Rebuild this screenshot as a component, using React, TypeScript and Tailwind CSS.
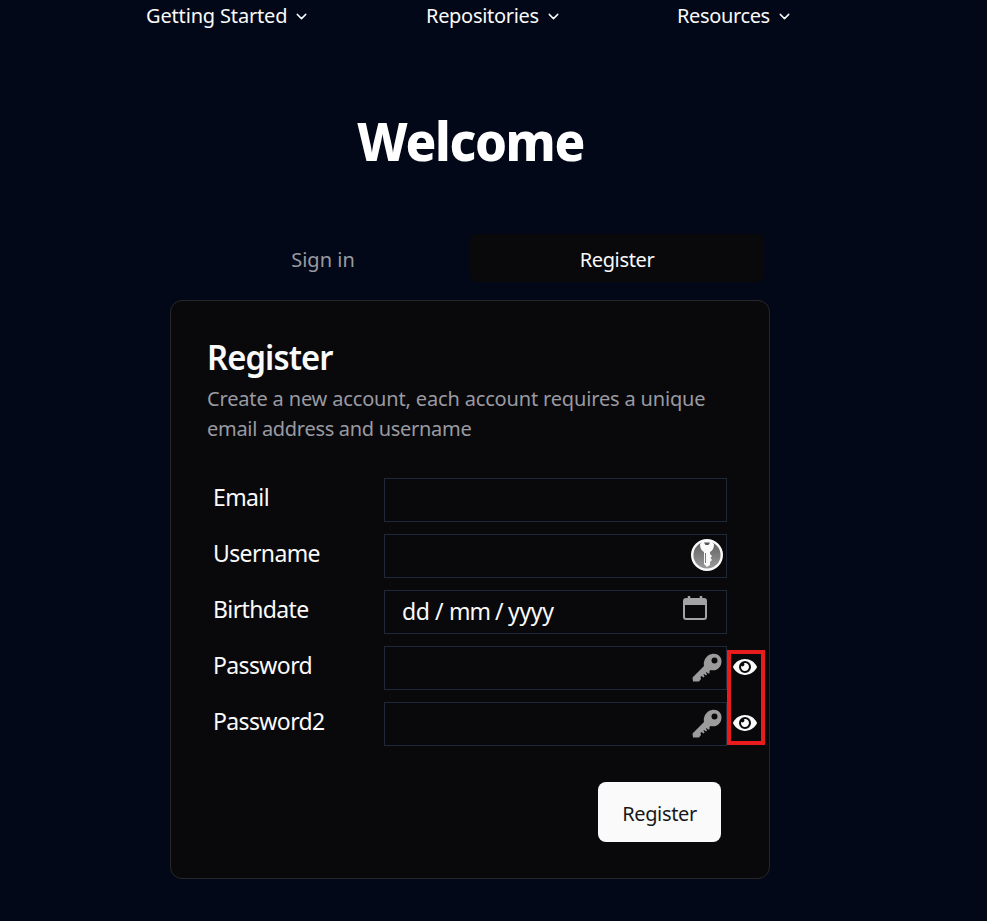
import { ChevronDown } from "lucide-react";
import { FaEye } from "react-icons/fa";

const sans = "font-['Noto_Sans','Open_Sans',sans-serif]";

function NavItem({ label, className }: { label: string; className: string }) {
  return (
    <button className={`flex items-center whitespace-nowrap text-[20px] leading-[30px] ${className}`}>
      <span>{label}</span>
      <ChevronDown className="mt-0.5 ml-[6px] size-[17px]" strokeWidth={2} />
    </button>
  );
}

function KeyIcon() {
  return (
    <svg viewBox="0 0 30 30" className="size-[30px]" fill="#9b9b9b">
      <path
        fillRule="evenodd"
        d="M20 1C25 0 30 3.500 29.500 9C29 15 24.500 18.500 18.500 17L17.500 18L17.500 20.500L16 20.500L14.500 19L14 19.500L15 21.500L14 22.500L12 21L11.500 21.500L12.500 23.500L11.500 24.500L9.500 23L8.500 24L9 26L7 28.500H1L0.500 24.500L12 13C11 8 14 2 20 1ZM22.500 4.500A3 3 0 1 0 22.500 10.500A3 3 0 1 0 22.500 4.500Z"
      />
    </svg>
  );
}

function BadgeIcon() {
  return (
    <svg viewBox="0 0 32 32" className="size-8">
      <defs>
        <linearGradient id="badge" x1="0" y1="0" x2="0" y2="1">
          <stop offset="0" stopColor="#5c5c5c" />
          <stop offset="1" stopColor="#9c9c9c" />
        </linearGradient>
      </defs>
      <circle cx="16" cy="16" r="14.8" fill="url(#badge)" stroke="#fafafa" strokeWidth="2.4" />
      <path d="M9 5Q9 11 13 13V25L16 28L19 26V23L21 21L19.500 19L21 17L19 15V13Q23 11 23 5L20 2H12Z" fill="#fafafa" />
      <path d="M13 3.500H19L17.500 6H14.500Z" fill="#555" />
      <path d="M14.500 14V24" stroke="#777" />
    </svg>
  );
}

function CalendarIcon() {
  return (
    <svg viewBox="0 0 24 24" className="size-6" fill="none" stroke="#a3a3a3">
      <rect x="1" y="3" width="22" height="20" rx="2" strokeWidth="2" />
      <path d="M1 4H23V9H1Z" fill="#a3a3a3" stroke="none" />
      <path d="M6 0V4M18 0V4" strokeWidth="2.5" />
    </svg>
  );
}

function Field({ label, kind }: { label: string; kind: string }) {
  return (
    <div className="flex h-11 items-center">
      <label className="w-[171px] shrink-0 pb-1.5 text-[23px] leading-8 tracking-[-0.620px]">{label}</label>
      <div className="flex h-11 w-[343px] shrink-0 items-center border border-[#1e293b]">
        {kind === "date" && (
          <>
            <div className="mb-0.5 ml-[17px] flex text-[23px] leading-8 tracking-[-0.300px]">
              <span className="w-[33px]">dd</span>
              <span className="w-[14px]">/</span>
              <span className="w-[46px] tracking-[-1px]">mm</span>
              <span className="w-[13px]">/</span>
              <span>yyyy</span>
            </div>
            <span className="mr-[19px] mb-2 ml-auto">
              <CalendarIcon />
            </span>
          </>
        )}
        {kind === "user" && (
          <span className="mr-[3px] mb-0.5 ml-auto">
            <BadgeIcon />
          </span>
        )}
        {kind === "password" && (
          <span className="mr-1 mb-px ml-auto">
            <KeyIcon />
          </span>
        )}
      </div>
      {kind === "password" && <FaEye className="mb-0.5 ml-1.5 size-6 shrink-0" />}
    </div>
  );
}

export default function App() {
  return (
    <main className={`h-[921px] w-[987px] overflow-hidden bg-[#020817] text-[#fafafa] ${sans}`}>
      <nav className="flex h-[31px]">
        <NavItem label="Getting Started" className="ml-[146px] w-[280px] tracking-[-0.160px]" />
        <NavItem label="Repositories" className="w-[251px] tracking-[-0.300px]" />
        <NavItem label="Resources" className="w-[130px] tracking-[-0.370px]" />
      </nav>
      <h1 className="mt-[70px] ml-[357px] w-fit origin-left scale-x-[0.96] text-[53px] leading-[80px] font-extrabold tracking-[-1.400px] text-white">
        Welcome
      </h1>
      <div className="mt-[53px] ml-[176px] flex h-12 w-[588px] text-[20px] leading-[30px]">
        <div className="flex flex-1 items-center justify-center pt-1 text-[#9a9aa2]">Sign in</div>
        <div className="flex flex-1 items-center justify-center rounded-md bg-[#09090b] pt-1 tracking-[-0.350px]">Register</div>
      </div>
      <section className="mt-[18px] ml-[170px] h-[579px] w-[600px] rounded-xl border border-[#27272a] bg-[#09090b]">
        <h2 className="mt-[38px] ml-9 w-fit origin-left scale-x-[0.935] text-[35px] leading-9 font-semibold tracking-[-0.950px]">
          Register
        </h2>
        <p className="mt-[9px] ml-9 text-[20px] leading-[30px] whitespace-nowrap text-[#9a9aa2]">
          <span className="tracking-[-0.160px]">Create a new account, each account requires a unique</span>
          <br />
          <span className="tracking-[-0.300px]">email address and username</span>
        </p>
        <div className="relative mt-[34px] ml-[42px] flex flex-col gap-3">
          <Field label="Email" kind="text" />
          <Field label="Username" kind="user" />
          <Field label="Birthdate" kind="date" />
          <Field label="Password" kind="password" />
          <Field label="Password2" kind="password" />
          <div className="absolute top-[172px] left-[514px] h-[95px] w-[38px] border-4 border-[#e81c1c]" />
        </div>
        <button className="mt-9 ml-[427px] h-[60px] w-[123px] rounded-lg bg-[#fafafa] pt-1 text-[20px] tracking-[-0.350px] text-[#18181b]">
          Register
        </button>
      </section>
    </main>
  );
}
